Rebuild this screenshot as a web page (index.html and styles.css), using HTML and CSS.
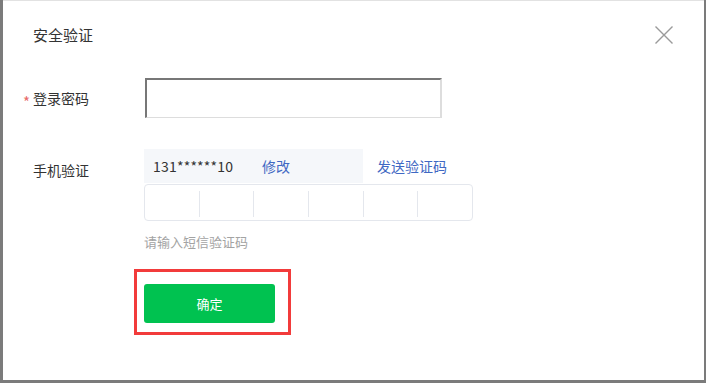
FILE: index.html
```html
<!DOCTYPE html>
<html>
<head>
    <meta charset="utf-8">
    <link rel="stylesheet" href="styles.css">
</head>
<body>
    <div class="dialog">
        <div class="dialog-header">
            <span class="dialog-title">安全验证</span>
            <svg class="close-btn" width="18" height="18" viewBox="0 0 18 18">
                <path d="M0.5 0.5 L17.5 17.5 M17.5 0.5 L0.5 17.5" stroke="#9a9a9a" stroke-width="1.4" fill="none"/>
            </svg>
        </div>

        <div class="form-row row-password">
            <label class="form-label"><span class="required">*</span>登录密码</label>
            <input class="password-input" type="password">
        </div>

        <div class="form-row row-phone">
            <label class="form-label label-phone">手机验证</label>
            <div class="phone-block">
                <div class="phone-line">
                    <div class="phone-box">
                        <span class="phone-number">131******10</span>
                        <a class="link">修改</a>
                    </div>
                    <a class="link send-code">发送验证码</a>
                </div>
                <div class="code-box">
                    <div class="code-cell first"></div>
                    <div class="code-cell"></div>
                    <div class="code-cell"></div>
                    <div class="code-cell"></div>
                    <div class="code-cell"></div>
                    <div class="code-cell"></div>
                </div>
                <p class="hint">请输入短信验证码</p>
                <div class="highlight">
                    <button class="submit-btn">确定</button>
                </div>
            </div>
        </div>
    </div>
</body>
</html>
```

FILE: styles.css
```css
body {
    margin: 0;
    padding: 0;
    background: #7b7b7b;
    font-family: "Noto Sans CJK SC", "Liberation Sans", sans-serif;
    color: #333;
}

.dialog {
    width: 701px;
    height: 380px;
    margin-left: 3px;
    background: #fff;
    border-top: 1px solid #e2e2e2;
    box-sizing: border-box;
    padding: 24px 31px 0 30px;
}

.dialog-header {
    display: flex;
    justify-content: space-between;
    align-items: center;
    height: 20px;
}

.dialog-title {
    font-size: 15px;
    line-height: 20px;
}

.close-btn {
    display: block;
}

.form-row {
    display: flex;
}

.form-label {
    width: 111px;
    flex-shrink: 0;
    font-size: 14px;
    line-height: 20px;
    position: relative;
}

.required {
    position: absolute;
    left: -10px;
    top: 7px;
    color: #e86a6a;
    font-size: 15px;
    line-height: 14px;
}

.row-password {
    margin-top: 33px;
    align-items: center;
}

.password-input {
    margin: 0 0 0 1px;
    padding: 0;
    width: 297px;
    height: 40px;
    box-sizing: border-box;
    border-top: 2px solid #777;
    border-left: 2px solid #777;
    border-right: 2px solid #ddd;
    border-bottom: 1px solid #ddd;
    outline: none;
}

.row-phone {
    margin-top: 31px;
}

.label-phone {
    padding-top: 11px;
}

.phone-line {
    display: flex;
    align-items: center;
    height: 34px;
}

.phone-box {
    display: flex;
    align-items: center;
    width: 219px;
    height: 34px;
    box-sizing: border-box;
    padding-left: 9px;
    background: #f5f7fa;
    font-size: 14px;
}

.phone-number {
    width: 109px;
    letter-spacing: 0.2px;
}

.link {
    color: #3f68c3;
    font-size: 14px;
    cursor: pointer;
}

.send-code {
    margin-left: 14px;
}

.code-box {
    display: flex;
    width: 329px;
    height: 37px;
    margin-top: 1px;
    box-sizing: border-box;
    border: 1px solid #e4e7ed;
    border-radius: 4px;
}

.code-cell {
    flex: 1;
    margin: 6px 0 3px;
    border-left: 1px solid #e4e7ed;
}

.code-cell.first {
    border-left: none;
}

.hint {
    margin: 12px 0 0;
    font-size: 13px;
    line-height: 18px;
    color: #a3a3a3;
}

.highlight {
    display: inline-block;
    margin: 18px 0 0 -10px;
    padding: 12px 13px 9px 7px;
    border: 3px solid #f23b3b;
}

.submit-btn {
    display: block;
    width: 131px;
    height: 39px;
    border: none;
    border-radius: 3px;
    background: #00c250;
    color: #fff;
    font-family: inherit;
    font-size: 13px;
    cursor: pointer;
}
```
